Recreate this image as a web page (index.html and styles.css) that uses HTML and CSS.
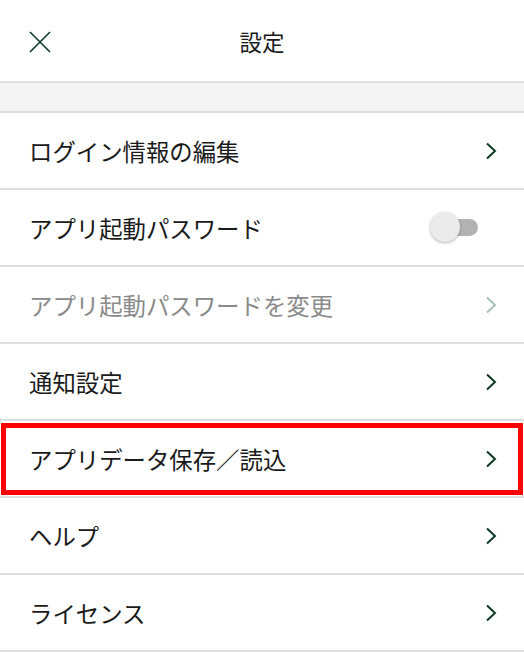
FILE: index.html
```html
<!DOCTYPE html>
<html lang="ja">
<head>
<meta charset="utf-8">
<link rel="stylesheet" href="styles.css">
</head>
<body>
<div class="screen">
  <header class="header">
    <svg class="close" width="22" height="22" viewBox="0 0 22 22"><path d="M1 1 L21 21 M21 1 L1 21" stroke="#0e3a24" stroke-width="1.6" fill="none"/></svg>
    <div class="title">設定</div>
  </header>
  <div class="band"></div>
  <ul class="list">
    <li class="row"><span class="label">ログイン情報の編集</span><svg class="chev" width="12" height="18" viewBox="0 0 12 18"><path d="M2 1.5 L10 9 L2 16.5" stroke="#0e3a24" stroke-width="2" fill="none"/></svg></li>
    <li class="row"><span class="label">アプリ起動パスワード</span><span class="toggle"><span class="track"></span><span class="knob"></span></span></li>
    <li class="row disabled"><span class="label">アプリ起動パスワードを変更</span><svg class="chev" width="12" height="18" viewBox="0 0 12 18"><path d="M2 1.5 L10 9 L2 16.5" stroke="#a8c3b6" stroke-width="2" fill="none"/></svg></li>
    <li class="row"><span class="label">通知設定</span><svg class="chev" width="12" height="18" viewBox="0 0 12 18"><path d="M2 1.5 L10 9 L2 16.5" stroke="#0e3a24" stroke-width="2" fill="none"/></svg></li>
    <li class="row highlighted"><span class="label">アプリデータ保存／読込</span><svg class="chev" width="12" height="18" viewBox="0 0 12 18"><path d="M2 1.5 L10 9 L2 16.5" stroke="#0e3a24" stroke-width="2" fill="none"/></svg></li>
    <li class="row"><span class="label">ヘルプ</span><svg class="chev" width="12" height="18" viewBox="0 0 12 18"><path d="M2 1.5 L10 9 L2 16.5" stroke="#0e3a24" stroke-width="2" fill="none"/></svg></li>
    <li class="row"><span class="label">ライセンス</span><svg class="chev" width="12" height="18" viewBox="0 0 12 18"><path d="M2 1.5 L10 9 L2 16.5" stroke="#0e3a24" stroke-width="2" fill="none"/></svg></li>
  </ul>
</div>
</body>
</html>
```

FILE: styles.css
```css
* { box-sizing: border-box; }
html, body {
  margin: 0;
  padding: 0;
  background: #ffffff;
}
body {
  font-family: "Noto Sans CJK JP", "Noto Sans", sans-serif;
  color: #1a1a1a;
  width: 524px;
  height: 653px;
  overflow: hidden;
}
.screen {
  position: relative;
}
.header {
  position: relative;
  height: 83px;
  border-bottom: 2px solid #dedede;
  display: flex;
  align-items: center;
  justify-content: center;
}
.close {
  position: absolute;
  left: 29px;
  top: 31px;
}
.title {
  font-size: 22.5px;
  line-height: 1;
  margin-top: 1px;
  color: #1a1a1a;
}
.band {
  height: 30px;
  background: #f4f4f4;
  border-bottom: 2px solid #dedede;
}
.list {
  list-style: none;
  margin: 0;
  padding: 0;
}
.row {
  position: relative;
  height: 77px;
  border-bottom: 2px solid #dedede;
  display: flex;
  align-items: center;
  justify-content: space-between;
  padding: 0 27px 0 29px;
}
.label {
  font-size: 23.4px;
  line-height: 1;
  margin-top: 2px;
}
.disabled .label {
  color: #8a8a8a;
}
.chev {
  margin-top: 1px;
}
.toggle {
  position: relative;
  width: 49px;
  height: 31px;
  margin-right: 18px;
}
.track {
  position: absolute;
  left: 12px;
  top: 7px;
  width: 36px;
  height: 17px;
  border-radius: 9px;
  background: #b2b2b2;
}
.knob {
  position: absolute;
  left: 0;
  top: 0;
  width: 30px;
  height: 30px;
  border-radius: 50%;
  background: #ebebeb;
  box-shadow: 0 1px 3px rgba(0,0,0,0.3);
}
.highlighted::after {
  content: "";
  position: absolute;
  left: 1px;
  right: 1px;
  top: 2px;
  bottom: 1px;
  border: 5px solid #ff0000;
}
```
